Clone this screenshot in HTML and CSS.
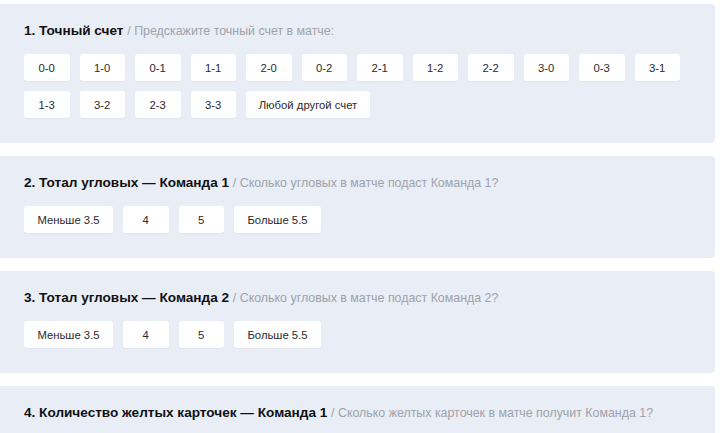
FILE: index.html
```html
<!DOCTYPE html>
<html lang="ru">
<head>
<meta charset="utf-8">
<link rel="stylesheet" href="styles.css">
</head>
<body>
<div class="list">
  <section class="card">
    <h3 class="title">1. Точный счет <span class="hint">/ Предскажите точный счет в матче:</span></h3>
    <div class="options">
      <button class="opt sq">0-0</button>
      <button class="opt sq">1-0</button>
      <button class="opt sq">0-1</button>
      <button class="opt sq">1-1</button>
      <button class="opt sq">2-0</button>
      <button class="opt sq">0-2</button>
      <button class="opt sq">2-1</button>
      <button class="opt sq">1-2</button>
      <button class="opt sq">2-2</button>
      <button class="opt sq">3-0</button>
      <button class="opt sq">0-3</button>
      <button class="opt sq">3-1</button>
      <button class="opt sq">1-3</button>
      <button class="opt sq">3-2</button>
      <button class="opt sq">2-3</button>
      <button class="opt sq">3-3</button>
      <button class="opt wide">Любой другой счет</button>
    </div>
  </section>
  <section class="card">
    <h3 class="title">2. Тотал угловых — Команда 1 <span class="hint">/ Сколько угловых в матче подаст Команда 1?</span></h3>
    <div class="options">
      <button class="opt mid">Меньше 3.5</button>
      <button class="opt sq">4</button>
      <button class="opt sq">5</button>
      <button class="opt mid2">Больше 5.5</button>
    </div>
  </section>
  <section class="card">
    <h3 class="title">3. Тотал угловых — Команда 2 <span class="hint">/ Сколько угловых в матче подаст Команда 2?</span></h3>
    <div class="options">
      <button class="opt mid">Меньше 3.5</button>
      <button class="opt sq">4</button>
      <button class="opt sq">5</button>
      <button class="opt mid2">Больше 5.5</button>
    </div>
  </section>
  <section class="card">
    <h3 class="title">4. Количество желтых карточек — Команда 1 <span class="hint">/ Сколько желтых карточек в матче получит Команда 1?</span></h3>
  </section>
</div>
</body>
</html>
```
FILE: styles.css
```css
* { box-sizing: border-box; }
html, body { margin: 0; padding: 0; background: #fff; }
body {
  font-family: "Liberation Sans", Arial, sans-serif;
  color: #222;
  overflow: hidden;
}
.list {
  display: flex;
  flex-direction: column;
  gap: 13px;
  padding: 4px 5px 0 0;
}
.card {
  background: #e9edf6;
  border-radius: 0 4px 4px 0;
  padding: 18px 24px 25px 24px;
}
.title {
  margin: 0 0 14px 0;
  font-size: 13.6px;
  line-height: 18px;
  font-weight: 700;
  color: #111;
}
.hint {
  font-weight: 400;
  font-size: 12.4px;
  color: #9ea2a9;
}
.options {
  display: flex;
  flex-wrap: wrap;
  gap: 10px 10px;
  width: 666px;
}
.opt {
  height: 27px;
  border: 0;
  border-radius: 3px;
  background: #fff;
  font-family: inherit;
  font-size: 11.3px;
  color: #2a2a2a;
  padding: 0;
  box-shadow: 0 1px 1px rgba(40, 60, 100, 0.04);
}
.sq { width: 45.5px; }
.wide { width: 124px; }
.mid { width: 89px; }
.mid2 { width: 87px; }
```
